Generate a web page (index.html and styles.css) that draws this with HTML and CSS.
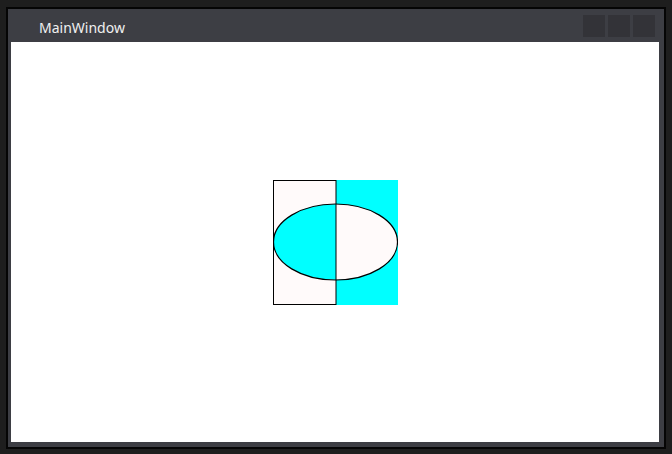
FILE: index.html
```html
<!DOCTYPE html>
<html>
<head>
<meta charset="utf-8">
<link rel="stylesheet" href="styles.css">
</head>
<body>
<div class="window">
  <div class="titlebar">
    <span class="title">MainWindow</span>
    <div class="buttons">
      <div class="btn"></div>
      <div class="btn"></div>
      <div class="btn"></div>
    </div>
  </div>
  <div class="client">
    <svg class="shape" width="125" height="125" viewBox="0 0 125 125">
      <defs>
        <clipPath id="leftHalf"><rect x="0" y="0" width="63" height="125"/></clipPath>
        <clipPath id="rightHalf"><rect x="63" y="0" width="62" height="125"/></clipPath>
      </defs>
      <rect x="0" y="0" width="63" height="125" fill="#FFFAFA"/>
      <rect x="63" y="0" width="62" height="125" fill="#00FFFF"/>
      <ellipse cx="62.5" cy="62" rx="62" ry="38" fill="#00FFFF" clip-path="url(#leftHalf)"/>
      <ellipse cx="62.5" cy="62" rx="62" ry="38" fill="#FFFAFA" clip-path="url(#rightHalf)"/>
      <rect x="0.5" y="0.5" width="62.5" height="124" fill="none" stroke="#000" stroke-width="1"/>
      <ellipse cx="62.5" cy="62" rx="62" ry="38" fill="none" stroke="#000" stroke-width="1.2"/>
    </svg>
  </div>
</div>
</body>
</html>
```
FILE: styles.css
```css
html, body {
  margin: 0;
  padding: 0;
  background: #1e1e1e;
  width: 672px;
  height: 454px;
  overflow: hidden;
}
body {
  padding: 7px 0 0 6px;
  box-sizing: border-box;
}
.window {
  width: 660px;
  height: 442px;
  box-sizing: border-box;
  border: 2px solid #050505;
  background: #3d3e44;
  display: flex;
  flex-direction: column;
}
.titlebar {
  height: 33px;
  display: flex;
  align-items: flex-start;
  justify-content: space-between;
  padding: 0 9px 0 31px;
}
.title {
  font-family: "Noto Sans", "Open Sans", sans-serif;
  font-size: 14px;
  color: #f0f0f0;
  line-height: 20px;
  margin-top: 9px;
}
.buttons {
  display: flex;
  gap: 3px;
  margin-top: 6px;
}
.btn {
  width: 22px;
  height: 22px;
  background: #333338;
}
.client {
  flex: 1;
  margin: 0 5px 5px 3px;
  background: #ffffff;
  display: flex;
  align-items: center;
  justify-content: center;
}
.shape {
  display: block;
}
```
